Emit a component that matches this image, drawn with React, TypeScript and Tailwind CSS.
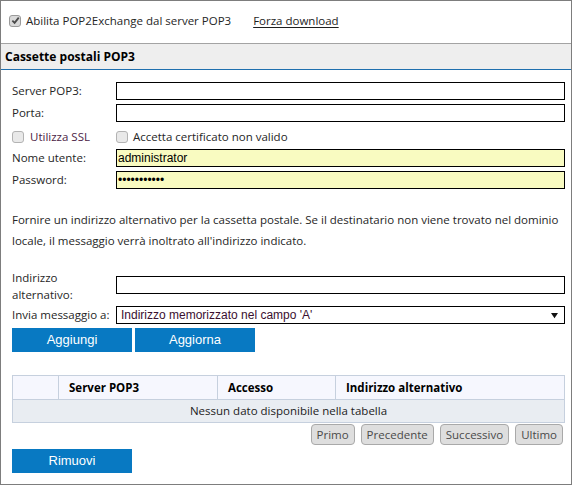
import type { ReactNode } from "react";

const sans = "font-['Open_Sans',sans-serif]";
const arial = "font-['Liberation_Sans',Arial,sans-serif]";

function Box({ checked }: { checked?: boolean }) {
  return (
    <span
      className={`inline-flex h-[12px] w-[12px] shrink-0 items-center justify-center rounded-[3px] border ${
        checked ? "border-[#9a9a9a] bg-[#d9d9d9]" : "border-[#b3b3b3] bg-[#e9e9e9]"
      }`}
    >
      {checked && (
        <svg viewBox="0 0 10 10" className="h-[9px] w-[9px]">
          <path d="M1.5 5.2 L4 7.6 L8.6 1.8" fill="none" stroke="#4a4a4a" strokeWidth="2" />
        </svg>
      )}
    </span>
  );
}

function Row({ label, children }: { label: ReactNode; children: ReactNode }) {
  return (
    <div className="grid h-[18px] grid-cols-[104px_1fr] items-center">
      <span>{label}</span>
      {children}
    </div>
  );
}

function Field({ value = "", yellow }: { value?: string; yellow?: boolean }) {
  return (
    <input
      readOnly
      value={value}
      className={`h-[18px] w-full border border-black px-[1px] text-[12px] text-black outline-none ${arial} ${
        yellow ? "bg-[#f9fbc1]" : "bg-white"
      }`}
    />
  );
}

function BlueButton({ children }: { children: ReactNode }) {
  return (
    <button
      type="button"
      className={`h-[24px] w-[120px] bg-[#0879c2] text-[13px] text-white ${arial}`}
    >
      {children}
    </button>
  );
}

const pager = ["Primo", "Precedente", "Successivo", "Ultimo"];

export default function App() {
  return (
    <div className={`h-[485px] w-[572px] border border-[#7d7d7d] bg-white text-[11.5px] text-[#262626] ${sans}`}>
      <div className="flex h-[42px] items-start pl-[8px] pt-[11px]">
        <label className="flex items-center gap-[5px]">
          <Box checked />
          <span>Abilita POP2Exchange dal server POP3</span>
        </label>
        <a className="ml-[22px] text-[#1e1e1e] underline underline-offset-2">Forza download</a>
      </div>

      <div className="flex h-[27px] items-center border-y border-t-[#a3a3a3] border-b-[#1f6fae] bg-[#eeeeee] px-[4px] text-[12px] font-bold text-black">
        Cassette postali POP3
      </div>

      <div className="pl-[11px] pr-[6px] pt-[12px]">
        <div className="flex flex-col gap-[4px]">
          <Row label="Server POP3:">
            <Field />
          </Row>
          <Row label="Porta:">
            <Field />
          </Row>
          <div className="grid h-[19px] grid-cols-[104px_1fr] items-center pt-[2px]">
            <label className="flex items-center gap-[6px]">
              <Box />
              <span className="text-[#4b1c45]">Utilizza SSL</span>
            </label>
            <label className="flex items-center gap-[5px]">
              <Box />
              <span>Accetta certificato non valido</span>
            </label>
          </div>
          <Row label="Nome utente:">
            <Field yellow value="administrator" />
          </Row>
          <Row label="Password:">
            <Field yellow value="•••••••••••" />
          </Row>
        </div>

        <p className="mt-[20px] leading-[21px]">
          Fornire un indirizzo alternativo per la cassetta postale. Se il destinatario non viene trovato nel dominio
          locale, il messaggio verrà inoltrato all'indirizzo indicato.
        </p>

        <div className="mt-[18px] grid grid-cols-[104px_1fr] items-center">
          <span className="leading-[17px]">
            Indirizzo
            <br />
            alternativo:
          </span>
          <div className="pb-[2px]">
            <Field />
          </div>
        </div>

        <div className="mt-[3px] grid h-[18px] grid-cols-[104px_1fr] items-center">
          <span>Invia messaggio a:</span>
          <div className={`flex h-[18px] items-center justify-between border border-black bg-white pl-[4px] pr-[6px] text-[12px] text-[#3a1030] ${arial}`}>
            <span>Indirizzo memorizzato nel campo 'A'</span>
            <svg viewBox="0 0 8 8" className="h-[7px] w-[7px]">
              <path d="M0 1 H8 L4 7 Z" fill="#111" />
            </svg>
          </div>
        </div>

        <div className="mt-[4px] flex gap-[3px]">
          <BlueButton>Aggiungi</BlueButton>
          <BlueButton>Aggiorna</BlueButton>
        </div>

        <table className="mt-[23px] w-full border-collapse text-[11.5px]">
          <thead>
            <tr className="h-[24px] bg-[#f6f7fe] text-left font-bold text-black">
              <th className="w-[46px] border border-[#c6d0de]" />
              <th className="w-[159px] border border-[#c6d0de] pl-[10px]">Server POP3</th>
              <th className="w-[118px] border border-[#c6d0de] pl-[10px]">Accesso</th>
              <th className="border border-[#c6d0de] pl-[10px]">Indirizzo alternativo</th>
            </tr>
          </thead>
          <tbody>
            <tr className="h-[23px] bg-[#e9edf2]">
              <td colSpan={4} className="border border-[#c6d0de] text-center text-[#222]">
                Nessun dato disponibile nella tabella
              </td>
            </tr>
          </tbody>
        </table>

        <div className="mt-[1px] flex justify-end gap-[6px] pr-[2px]">
          {pager.map((p) => (
            <button
              key={p}
              type="button"
              className="h-[21px] rounded-[4px] border border-[#a9a9a9] bg-[#dedede] px-[5px] text-[11.5px] text-[#4a4a4a]"
            >
              {p}
            </button>
          ))}
        </div>

        <div className="mt-[4px]">
          <BlueButton>Rimuovi</BlueButton>
        </div>
      </div>
    </div>
  );
}
